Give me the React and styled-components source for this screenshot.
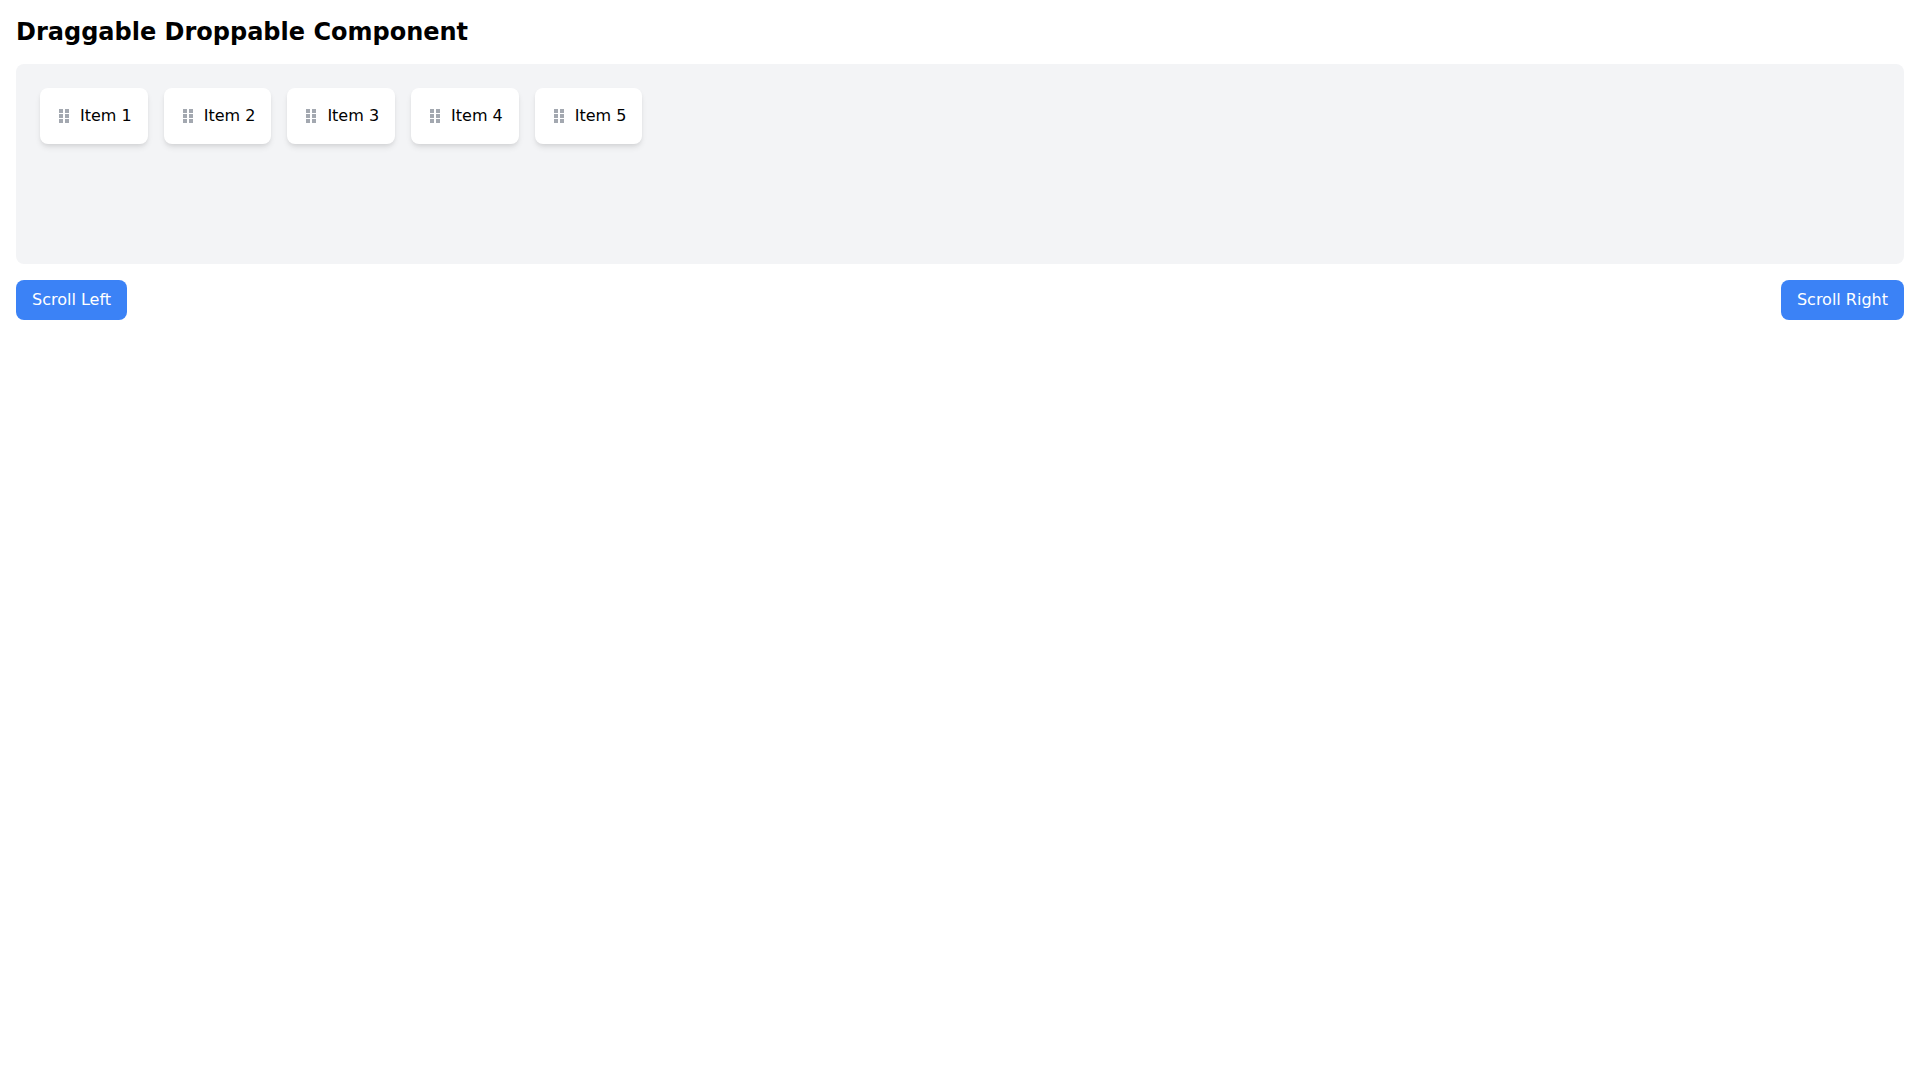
import React, { useRef } from "react";
import styled, { createGlobalStyle } from "styled-components";

const GlobalStyle = createGlobalStyle`
  *, *::before, *::after { box-sizing: border-box; }
  body {
    margin: 0;
    background: #fff;
    color: #000;
    font-family: "DejaVu Sans", sans-serif;
    font-size: 16px;
    line-height: 24px;
  }
`;

const Page = styled.main`
  padding: 16px;
`;

const Title = styled.h1`
  margin: 0 0 16px;
  font-size: 24px;
  line-height: 32px;
  font-weight: 700;
`;

const Track = styled.ul`
  display: flex;
  align-items: flex-start;
  gap: 16px;
  min-height: 200px;
  margin: 0;
  padding: 24px;
  list-style: none;
  overflow-x: auto;
  background: #f3f4f6;
  border-radius: 8px;
`;

const Item = styled.li`
  display: flex;
  align-items: center;
  gap: 8px;
  flex-shrink: 0;
  padding: 16px;
  background: #fff;
  border-radius: 8px;
  box-shadow: 0 4px 6px -1px rgba(0, 0, 0, 0.1), 0 2px 4px -1px rgba(0, 0, 0, 0.06);
  cursor: move;
`;

const GripIcon = styled.svg`
  width: 16px;
  height: 16px;
  fill: #a3a8b0;
`;

const Controls = styled.div`
  display: flex;
  justify-content: space-between;
  margin-top: 16px;
`;

const ScrollButton = styled.button`
  padding: 8px 16px;
  border: 0;
  border-radius: 8px;
  background: #3b82f6;
  color: #fff;
  font: inherit;
  cursor: pointer;
`;

const items = ["Item 1", "Item 2", "Item 3", "Item 4", "Item 5"];

function Grip() {
  return (
    <GripIcon viewBox="0 0 16 16" shapeRendering="crispEdges" aria-hidden="true">
      <path d="M3 1h4v4H3zM9 1h4v4H9zM3 6h4v4H3zM9 6h4v4H9zM3 11h4v4H3zM9 11h4v4H9z" />
    </GripIcon>
  );
}

export default function App() {
  const track = useRef(null);
  const scroll = (left) => track.current.scrollBy({ left, behavior: "smooth" });

  return (
    <Page>
      <GlobalStyle />
      <Title>Draggable Droppable Component</Title>
      <Track ref={track}>
        {items.map((name) => (
          <Item key={name} draggable>
            <Grip />
            <span>{name}</span>
          </Item>
        ))}
      </Track>
      <Controls>
        <ScrollButton type="button" onClick={() => scroll(-200)}>Scroll Left</ScrollButton>
        <ScrollButton type="button" onClick={() => scroll(200)}>Scroll Right</ScrollButton>
      </Controls>
    </Page>
  );
}
